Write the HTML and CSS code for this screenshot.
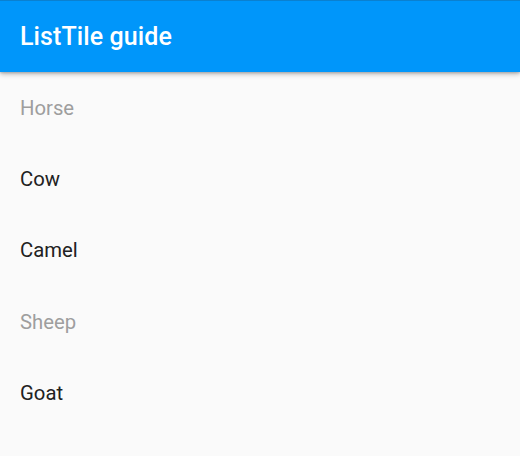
FILE: index.html
```html
<!DOCTYPE html>
<html>
<head>
<meta charset="utf-8">
<link rel="stylesheet" href="styles.css">
</head>
<body>
<div class="app">
  <header class="appbar"><h1 class="title">ListTile guide</h1></header>
  <ul class="list">
    <li class="tile disabled">Horse</li>
    <li class="tile">Cow</li>
    <li class="tile">Camel</li>
    <li class="tile disabled">Sheep</li>
    <li class="tile">Goat</li>
  </ul>
</div>
</body>
</html>
```
FILE: styles.css
```css
html, body {
  margin: 0;
  padding: 0;
  background: #fafafa;
}
.app {
  width: 520px;
  height: 456px;
  background: #fafafa;
  font-family: Roboto, "Noto Sans", sans-serif;
  overflow: hidden;
}
.appbar {
  height: 71px;
  background: #0096fa;
  border-top: 1px solid #0a80d0;
  display: flex;
  align-items: center;
  padding: 0 20px;
  box-shadow: 0 2px 5px rgba(0,0,0,0.28), 0 1px 2px rgba(0,0,0,0.15);
  position: relative;
  z-index: 1;
}
.title {
  margin: 0;
  color: #fff;
  font-size: 25px;
  font-weight: 500;
  letter-spacing: 0.1px;
}
.list {
  list-style: none;
  margin: 0;
  padding: 0;
}
.tile {
  height: 71.3px;
  display: flex;
  align-items: center;
  padding: 0 20px;
  font-size: 20.3px;
  color: #212121;
}
.tile.disabled {
  color: #9e9e9e;
}
```
